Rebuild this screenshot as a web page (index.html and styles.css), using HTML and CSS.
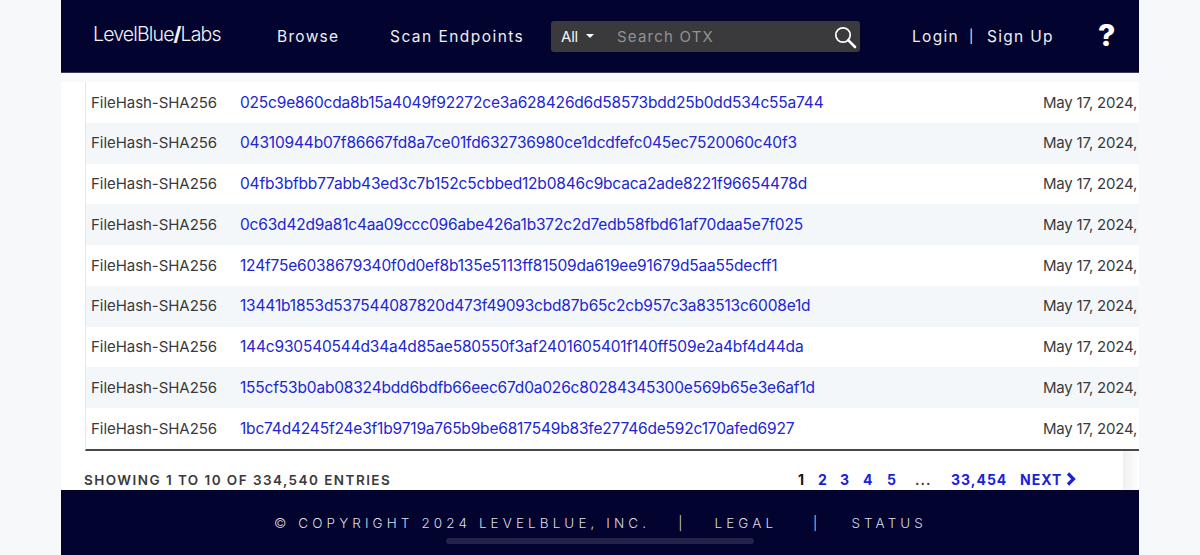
FILE: index.html
```html
<!DOCTYPE html>
<html lang="en">
<head>
<meta charset="utf-8">
<title>LevelBlue Labs</title>
<link rel="stylesheet" href="styles.css">
</head>
<body>
<div class="page">
  <header class="topbar">
    <div class="logo">LevelBlue<b>/</b>Labs</div>
    <a class="nav browse">Browse</a>
    <a class="nav scan">Scan Endpoints</a>
    <div class="search">
      <span class="all">All</span><span class="caret"></span>
      <span class="placeholder">Search OTX</span>
      <svg class="glass" width="24" height="24" viewBox="0 0 24 24"><circle cx="10" cy="10" r="7.2" fill="none" stroke="#fff" stroke-width="1.7"/><path d="M15.2 15.2L22 22" stroke="#fff" stroke-width="2.6" stroke-linecap="round"/></svg>
    </div>
    <a class="nav login">Login</a><span class="nav sep">|</span><a class="nav signup">Sign Up</a>
    <span class="help">?</span>
  </header>
  <main class="content">
    <div class="table">
      <div class="row"><span class="type">FileHash-SHA256</span><a class="hash">025c9e860cda8b15a4049f92272ce3a628426d6d58573bdd25b0dd534c55a744</a><span class="date">May 17, 2024,</span></div>
      <div class="row alt"><span class="type">FileHash-SHA256</span><a class="hash">04310944b07f86667fd8a7ce01fd632736980ce1dcdfefc045ec7520060c40f3</a><span class="date">May 17, 2024,</span></div>
      <div class="row"><span class="type">FileHash-SHA256</span><a class="hash">04fb3bfbb77abb43ed3c7b152c5cbbed12b0846c9bcaca2ade8221f96654478d</a><span class="date">May 17, 2024,</span></div>
      <div class="row alt"><span class="type">FileHash-SHA256</span><a class="hash">0c63d42d9a81c4aa09ccc096abe426a1b372c2d7edb58fbd61af70daa5e7f025</a><span class="date">May 17, 2024,</span></div>
      <div class="row"><span class="type">FileHash-SHA256</span><a class="hash">124f75e6038679340f0d0ef8b135e5113ff81509da619ee91679d5aa55decff1</a><span class="date">May 17, 2024,</span></div>
      <div class="row alt"><span class="type">FileHash-SHA256</span><a class="hash">13441b1853d537544087820d473f49093cbd87b65c2cb957c3a83513c6008e1d</a><span class="date">May 17, 2024,</span></div>
      <div class="row"><span class="type">FileHash-SHA256</span><a class="hash">144c930540544d34a4d85ae580550f3af2401605401f140ff509e2a4bf4d44da</a><span class="date">May 17, 2024,</span></div>
      <div class="row alt"><span class="type">FileHash-SHA256</span><a class="hash">155cf53b0ab08324bdd6bdfb66eec67d0a026c80284345300e569b65e3e6af1d</a><span class="date">May 17, 2024,</span></div>
      <div class="row"><span class="type">FileHash-SHA256</span><a class="hash">1bc74d4245f24e3f1b9719a765b9be6817549b83fe27746de592c170afed6927</a><span class="date">May 17, 2024,</span></div>
    </div>
    <div class="pager">
      <span class="showing">SHOWING 1 TO 10 OF 334,540 ENTRIES</span>
      <nav class="pages">
        <span class="cur">1</span><a class="p2">2</a><a class="p3">3</a><a class="p4">4</a><a class="p5">5</a><span class="dots">...</span><a class="last">33,454</a><a class="next">NEXT</a>
        <svg class="chev" width="10" height="14" viewBox="0 0 10 14"><path d="M2 1.5L7.5 7L2 12.5" fill="none" stroke="#1a22d8" stroke-width="3.2"/></svg>
      </nav>
    </div>
  </main>
  <footer class="footer">
    <div class="foot-text"><span>© COPYRIGHT 2024 LEVELBLUE, INC.</span><span class="bar1">|</span><span class="legal">LEGAL</span><span class="bar2">|</span><span class="status">STATUS</span></div>
    <div class="scroll"></div>
  </footer>
</div>
</body>
</html>
```
FILE: styles.css
```css
* { box-sizing: border-box; }
html, body { margin: 0; height: 555px; overflow: hidden; background: #f6f8f9; }
body { font-family: Inter, "Liberation Sans", sans-serif; }
.page { width: 1078px; height: 555px; margin-left: 61px; display: flex; flex-direction: column; background: #fff; }
.topbar { height: 73px; flex: none; background: #03032f; display: flex; align-items: center; color: #fff; border-bottom: 1px solid #3a3a58; padding-left: 32px; }
.logo { width: 184px; font-size: 19.5px; font-weight: 300; letter-spacing: -0.85px; color: #f2f2f6; padding-bottom: 4px; }
.logo b { font-weight: 800; }
.nav { font-size: 15.5px; letter-spacing: 1.3px; color: #eeeef2; white-space: nowrap; }
.browse { width: 113px; }
.scan { width: 161px; letter-spacing: 1.45px; }
.search { width: 309px; height: 31px; background: #3a3a3c; border-radius: 3px; display: flex; align-items: center; padding-left: 10px; position: relative; margin-right: 52px; }
.all { font-size: 15px; color: #f4f4f4; letter-spacing: -0.2px; }
.caret { width: 0; height: 0; border: 4.5px solid transparent; border-top: 4.5px solid #fff; border-bottom: 0; margin-left: 8px; }
.placeholder { font-size: 15px; letter-spacing: 1.2px; color: #929296; margin-left: 23px; }
.glass { position: absolute; right: 3px; top: 4px; }
.login { width: 57px; }
.sep { width: 18px; font-size: 13px; opacity: .99; }
.signup { width: 111px; }
.help { font-size: 30px; font-weight: 800; color: #fff; line-height: 1; padding-bottom: 2px; }
.content { flex: 1; padding: 9px 0 0 24px; position: relative; background: linear-gradient(#f7f9fa 0 9px, #fff 9px); }
.table { border-left: 1px solid #e4e7e9; border-bottom: 2px solid #48484c; }
.row { height: 40.75px; display: flex; align-items: center; background: #fff; padding: 0 0 0.5px 5px; font-size: 15px; color: #3a3a3c; white-space: nowrap; }
.alt { background: #f4f7f9; }
.type { width: 149px; letter-spacing: -0.05px; }
.hash { width: 803px; font-size: 15.5px; color: #2026d2; letter-spacing: -0.18px; }
.date { letter-spacing: -0.2px; }
.pager { height: 39px; display: flex; align-items: flex-end; padding-bottom: 2px; margin-left: -1px; font-size: 14px; font-weight: 600; letter-spacing: 1px; color: #3a3a3c; position: relative; white-space: nowrap; }
.pager::after { content: ""; position: absolute; right: 0; top: 0; bottom: 0; width: 16px; background: linear-gradient(90deg, #f0f0f1, #fff); }
.showing { width: 714px; font-size: 13.5px; letter-spacing: 1.45px; }
.pages { display: flex; align-items: center; font-weight: 700; }
.cur { color: #111; width: 20px; }
.pages a { color: #1a22d8; }
.p2 { width: 22px; }
.p3 { width: 23px; }
.p4 { width: 24px; }
.p5 { width: 28px; }
.dots { width: 36px; font-weight: 600; }
.last { width: 69px; }
.chev { margin-left: 4px; }
.footer { height: 65px; flex: none; background: #03032f; color: #dcdce4; position: relative; }
.foot-text { font-size: 13.5px; font-weight: 300; letter-spacing: 4.1px; padding: 25px 0 0 213px; display: flex; white-space: nowrap; }
.bar1 { margin-left: 28px; opacity: .99; }
.legal { margin-left: 28px; }
.bar2 { margin-left: 36px; opacity: .99; }
.status { margin-left: 30px; }
.scroll { position: absolute; left: 385px; top: 48px; width: 308px; height: 6px; border-radius: 3px; background: #23234a; }
```
